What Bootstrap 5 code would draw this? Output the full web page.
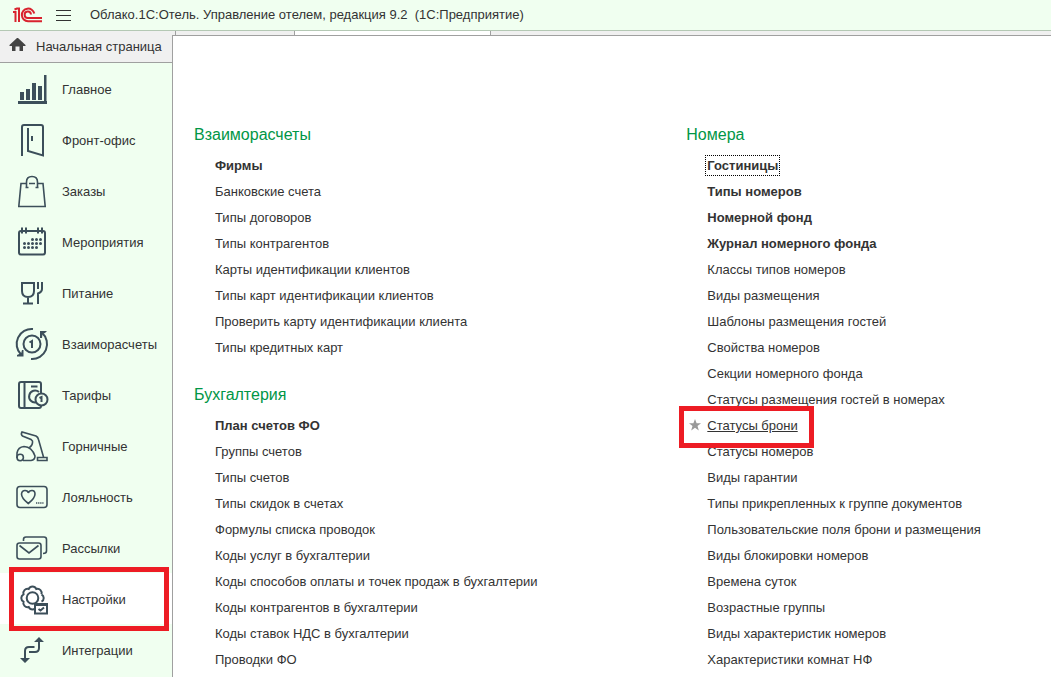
<!DOCTYPE html>
<html lang="ru">
<head>
<meta charset="utf-8">
<meta name="viewport" content="width=device-width, initial-scale=1">
<title>Облако.1С:Отель</title>
<link href="https://cdn.jsdelivr.net/npm/bootstrap@5.3.0/dist/css/bootstrap.min.css" rel="stylesheet">
<style>
  :root { --mint: #f0fff0; --ink: #333; --line: #a0a0a0; --alert: #ed1c24; --steel: #3c4f5a; }
  body { font: 13px/26px "Liberation Sans", Arial, sans-serif; color: var(--ink); background: #fff; }
  a { color: inherit; text-decoration: none; }
  .app-bar { height: 31px; background: var(--mint); border-bottom: 1px solid #b4c8b4; padding-left: 13px; }
  .menu-btn { margin-left: 13px; margin-right: 19px; }
  .side { width: 172px; background: var(--mint); }
  .home { height: 32px; background: #f0f0f0; border-bottom: 1px solid var(--line); padding-left: 9px; gap: 10px; }
  .side-link { height: 51px; padding-left: 14px; gap: 12px; }
  .side-link svg { fill: none; stroke: var(--steel); stroke-width: 2; flex: none; }
  .side-link .solid { fill: var(--steel); stroke: none; }
  .side-link .thin { stroke-width: 1.6; }
  .side-link span { padding-top: 2px; }
  .side-link.active { background: #fff; }
  .tab-strip { height: 4px; background: #f0f0f0; }
  .tab-strip div { border-right: 1px solid var(--line); }
  .tab-edge { width: 4px; }
  .tab-a { width: 119px; }
  .tab-b { width: 196px; background: #fff; }
  .panel { border-top: 1px solid var(--line); border-left: 1px solid var(--line); padding: 86px 0 0 21px; }
  .sections { display: grid; grid-template-columns: 27fr 20fr; }
  .section-title { font-size: 16px; line-height: 26px; color: #009646; margin: 0 0 5px; font-weight: 400; }
  .links { padding-left: 21px; margin-bottom: 21px; }
  .focused { outline: 1px dotted #000; outline-offset: 1px; line-height: 17px; display: inline-block; }
  .marker { border: 5px solid var(--alert); pointer-events: none; }
  .marker-side { inset: -6px 3px -7px 9px; }
  .marker-link { inset: -7px -16px -9px -28px; }
  .star { left: -18px; top: 6px; }
</style>
</head>
<body class="d-flex flex-column min-vh-100 overflow-hidden">
<header class="app-bar d-flex align-items-center">
  <svg width="30" height="16" viewBox="0 0 30 16" fill="none" stroke="#d9232e" role="img" aria-label="1С">
    <path stroke-width="2" d="M0 5H2.500V15M1.500 2.500 4 1.500H6V15"/>
    <path stroke-width="2" d="M21.300 6.500A6.300 6.300 0 1 0 15 14.200H29M18 7.500A3.200 3.200 0 1 0 15 11H29"/>
  </svg>
  <button type="button" class="menu-btn btn p-0 border-0 d-flex" aria-label="Меню">
    <svg width="15" height="13" stroke="#333" stroke-width="1"><path d="M0 1.500H15M0 6.500H15M0 11.500H15"/></svg>
  </button>
  <span>Облако.1С:Отель. Управление отелем, редакция 9.2&nbsp; (1С:Предприятие)</span>
</header>
<div class="d-flex flex-grow-1">
  <nav class="side flex-shrink-0">
    <a href="#" class="home d-flex align-items-center">
      <svg class="mb-1" width="17" height="13" viewBox="0 0 17 13" fill="#444"><path d="M8 0H9L16.500 7V8H14V13H10.500V8.500H6.500V13H3V8H.5V7Z"/></svg>
      <span>Начальная страница</span>
    </a>
    <div>
      <a href="#" class="side-link d-flex align-items-center"><svg width="36" height="41"><path class="solid" d="M6 24h4v8H6zM12 21h4v11h-4zM18 15h4v17h-4zM24 18h4v14h-4zM30 7h2.500v26h.5v3H4v-3h26z"/></svg><span>Главное</span></a>
      <a href="#" class="side-link d-flex align-items-center"><svg width="36" height="41"><path d="M8 37V8a2 2 0 0 1 2-2h17a2 2 0 0 1 2 2v28.500l-15-4.500V9M18 17v5"/></svg><span>Фронт-офис</span></a>
      <a href="#" class="side-link d-flex align-items-center"><svg width="36" height="41"><path class="thin" d="M12 13.500H7L4.800 36.500H31.200L29 13.500H24M15 13.500h6M12.500 18v-6q0-5.500 5.500-5.500t5.500 5.500v6M11.500 17.500h3M21.500 17.500h3"/></svg><span>Заказы</span></a>
      <a href="#" class="side-link d-flex align-items-center"><svg width="36" height="41"><rect x="5" y="10" width="26" height="23.500" rx="2"/><path d="M8 6.500v6M12 6.500v6M24 6.500v6M28 6.500v6"/><path stroke-width="3" stroke-linecap="round" stroke-dasharray="0 4" d="M18.500 18.500h8.100M10.500 22.500h16.100M10.500 26.500h12.100"/></svg><span>Мероприятия</span></a>
      <a href="#" class="side-link d-flex align-items-center"><svg width="36" height="41"><path d="M8 11H20V19Q20 25 14 25T8 19ZM14 25v6M9 31.500H19M24 10v7M28 10v7q0 3-4 4.500V32"/></svg><span>Питание</span></a>
      <a href="#" class="side-link d-flex align-items-center"><svg width="36" height="41"><circle cx="18" cy="21" r="8.500"/><path d="M15.500 19.500l2.500-1.500v7M19 6A15 15 0 0 0 7 31.500M17 36A15 15 0 0 0 28 9.800"/><path class="solid" d="M26 8h7l-2 2-2.500 1L28 15h-2zM3 33.500h6.500V27H8l-.8 3L3 32z"/></svg><span>Взаиморасчеты</span></a>
      <a href="#" class="side-link d-flex align-items-center"><svg width="36" height="41"><path d="M27 19V10a2 2 0 0 0-2-2H7a2 2 0 0 0-2 2V32a2 2 0 0 0 2 2H25a2 2 0 0 0 2-2M10.500 8V34M17 12.500h6.500M25 18A6 6 0 1 0 22 28.500"/><circle cx="27.500" cy="25.500" r="6"/><path d="M25.500 24l2-1v5"/></svg><span>Тарифы</span></a>
      <a href="#" class="side-link d-flex align-items-center"><svg width="36" height="41"><path class="thin" d="M9 35.500H17Q21 35 21 31Q18 22 10 21.500Q4 22 3 28V33M15.500 22.500Q19 20 18.500 16L17 14.500 8.500 11Q6.500 9.500 8 7L22 11Q24 12 24.500 14.500L29.500 32M23.500 32.500H33V35.500H23.500Z"/><circle class="thin" cx="6.200" cy="32.500" r="3.200"/></svg><span>Горничные</span></a>
      <a href="#" class="side-link d-flex align-items-center"><svg width="36" height="41"><g class="thin"><rect x="3" y="10.500" width="30" height="21" rx="3"/><path d="M14.300 27.500C11 25 7.500 21.500 7.500 18Q8 14.500 11 14.500T14.300 17Q15 14.500 18 14.500T21 18C21 21.500 17.500 25 14.300 27.500Z"/><path stroke-dasharray="1.300 .8" d="M22 27h7.500"/></g></svg><span>Лояльность</span></a>
      <a href="#" class="side-link d-flex align-items-center"><svg width="36" height="41"><g class="thin"><rect x="3" y="16" width="24" height="16" rx="2.500"/><path d="M9.500 14V12.500q0-2.500 2.500-2.500H30q2.500 0 2.500 2.500V24q0 2.500-3.500 2.500M5.500 18.500 15 26l9.500-7.500"/></g></svg><span>Рассылки</span></a>
      <a href="#" class="side-link active position-relative d-flex align-items-center" aria-current="page"><svg width="36" height="41"><path d="M27.500 16.300A4.200 4.200 0 0 0 22.300 11A4.200 4.200 0 0 0 14.700 11A4.200 4.200 0 0 0 9.500 16.300A4.200 4.200 0 0 0 9.500 23.700A4.200 4.200 0 0 0 14.700 29A4.200 4.200 0 0 0 22.300 29M27.500 23.700A4.200 4.200 0 0 0 27.500 16.300"/><circle cx="18.500" cy="20" r="5.800"/><path fill="#fff" d="M21 26H33V35.500H21Z"/><path d="M20.500 27H33.500M24.500 31l2 1.500 3.500-3"/></svg><span>Настройки</span><i class="marker marker-side position-absolute"></i></a>
      <a href="#" class="side-link d-flex align-items-center"><svg width="36" height="41"><path d="M11 31V22q0-4 4-4h5.500M25 12V19q0 4-4 4h-6"/><path class="solid" d="M25 8l5 5H20zM11 34l-5-5H16z"/></svg><span>Интеграции</span></a>
    </div>
  </nav>
  <main class="flex-grow-1 d-flex flex-column">
    <div class="tab-strip d-flex"><div class="tab-edge"></div><div class="tab-a"></div><div class="tab-b"></div></div>
    <div class="panel flex-grow-1">
      <div class="sections">
        <div>
          <h2 class="section-title">Взаиморасчеты</h2>
          <ul class="links list-unstyled">
            <li><a href="#" class="fw-bold">Фирмы</a></li>
            <li><a href="#">Банковские счета</a></li>
            <li><a href="#">Типы договоров</a></li>
            <li><a href="#">Типы контрагентов</a></li>
            <li><a href="#">Карты идентификации клиентов</a></li>
            <li><a href="#">Типы карт идентификации клиентов</a></li>
            <li><a href="#">Проверить карту идентификации клиента</a></li>
            <li><a href="#">Типы кредитных карт</a></li>
          </ul>
          <h2 class="section-title">Бухгалтерия</h2>
          <ul class="links list-unstyled mb-0">
            <li><a href="#" class="fw-bold">План счетов ФО</a></li>
            <li><a href="#">Группы счетов</a></li>
            <li><a href="#">Типы счетов</a></li>
            <li><a href="#">Типы скидок в счетах</a></li>
            <li><a href="#">Формулы списка проводок</a></li>
            <li><a href="#">Коды услуг в бухгалтерии</a></li>
            <li><a href="#">Коды способов оплаты и точек продаж в бухгалтерии</a></li>
            <li><a href="#">Коды контрагентов в бухгалтерии</a></li>
            <li><a href="#">Коды ставок НДС в бухгалтерии</a></li>
            <li><a href="#">Проводки ФО</a></li>
          </ul>
        </div>
        <div>
          <h2 class="section-title">Номера</h2>
          <ul class="links list-unstyled mb-0">
            <li><a href="#" class="fw-bold focused">Гостиницы</a></li>
            <li><a href="#" class="fw-bold">Типы номеров</a></li>
            <li><a href="#" class="fw-bold">Номерной фонд</a></li>
            <li><a href="#" class="fw-bold">Журнал номерного фонда</a></li>
            <li><a href="#">Классы типов номеров</a></li>
            <li><a href="#">Виды размещения</a></li>
            <li><a href="#">Шаблоны размещения гостей</a></li>
            <li><a href="#">Свойства номеров</a></li>
            <li><a href="#">Секции номерного фонда</a></li>
            <li><a href="#">Статусы размещения гостей в номерах</a></li>
            <li><a href="#" class="position-relative d-inline-block"><svg class="star position-absolute" width="12" height="12" viewBox="0 0 12 12" fill="#999"><path d="M6 0l1.600 4.200H12L8.500 7 9.800 11.500 6 8.800 2.200 11.500 3.500 7 0 4.200H4.400Z"/></svg><span class="text-decoration-underline">Статусы брони</span><i class="marker marker-link position-absolute"></i></a></li>
            <li><a href="#">Статусы номеров</a></li>
            <li><a href="#">Виды гарантии</a></li>
            <li><a href="#">Типы прикрепленных к группе документов</a></li>
            <li><a href="#">Пользовательские поля брони и размещения</a></li>
            <li><a href="#">Виды блокировки номеров</a></li>
            <li><a href="#">Времена суток</a></li>
            <li><a href="#">Возрастные группы</a></li>
            <li><a href="#">Виды характеристик номеров</a></li>
            <li><a href="#">Характеристики комнат НФ</a></li>
          </ul>
        </div>
      </div>
    </div>
  </main>
</div>
<script src="https://cdn.jsdelivr.net/npm/bootstrap@5.3.0/dist/js/bootstrap.bundle.min.js"></script>
</body>
</html>
